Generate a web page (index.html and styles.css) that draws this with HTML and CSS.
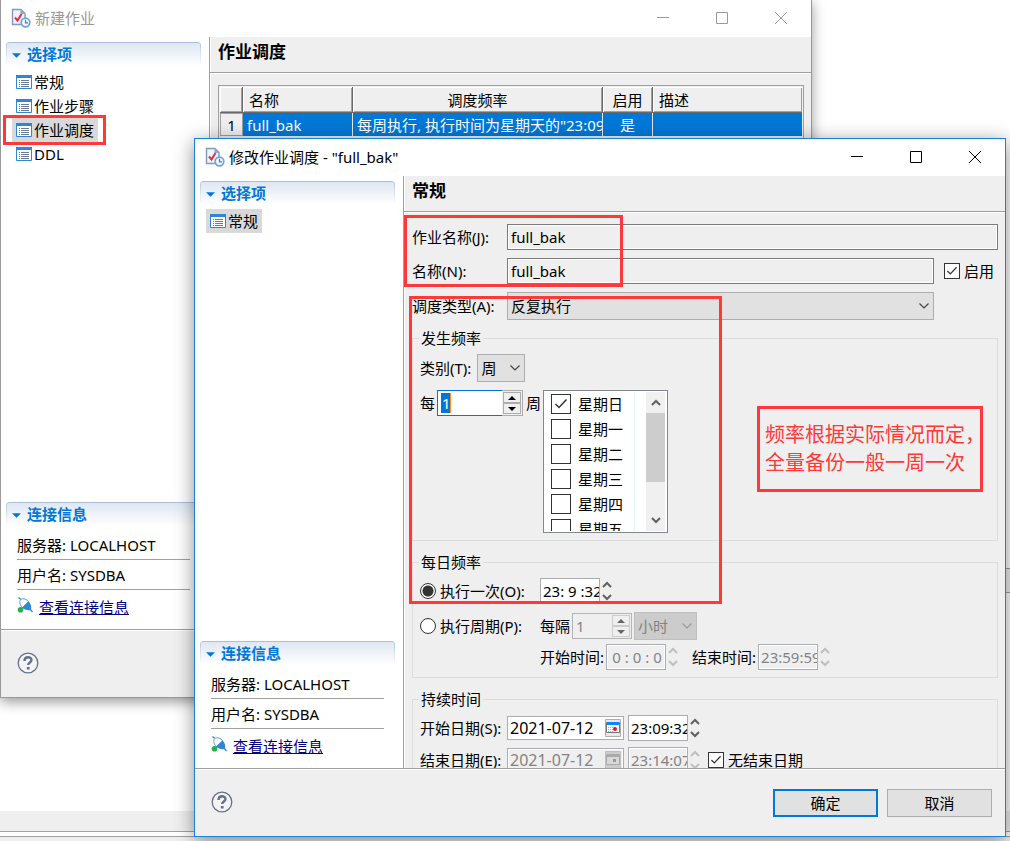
FILE: index.html
```html
<!DOCTYPE html>
<html lang="zh-CN">
<head>
    <meta charset="UTF-8">
    <meta name="viewport" content="width=device-width, initial-scale=1.0">
    <title>修改作业调度</title>
    <link rel="stylesheet" href="styles.css">
</head>
<body>
    <svg class="sprite" aria-hidden="true">
        <symbol id="icon-job" viewBox="0 0 20 20">
            <path d="M1.500 1.500h8.500l4 4v11h-12.500z" fill="#eef2fa" stroke="#8398bd" stroke-width="1.400"/>
            <path d="M9.500 1l5 5h-5z" fill="#8ba6d0"/>
            <path d="M4 9.500l2.500 3 4-6.500" fill="none" stroke="#dc3040" stroke-width="2"/>
            <circle cx="14.500" cy="14.500" r="4.300" fill="#f4faff" stroke="#6da4d8" stroke-width="1.700"/>
            <path d="M14.500 11.800v3h2.500" fill="none" stroke="#3c7fc4" stroke-width="1.200"/>
        </symbol>
        <symbol id="icon-list" viewBox="0 0 16 14">
            <path d="M.5.5h15v13h-15z" fill="#fff" stroke="#2f86d6"/>
            <path d="M0 0h16v3h-16z" fill="#2f86d6"/>
            <path d="M3 5.500h1M3 7.500h1M3 9.500h1M3 11.500h1M5 5.500h8M5 7.500h8M5 9.500h8M5 11.500h8" stroke="#6d7c96"/>
        </symbol>
        <symbol id="icon-plug" viewBox="0 0 16 16">
            <path d="M1.500.5l3 2.500" stroke="#2f86d6" stroke-width="1.200"/>
            <path d="M3.500 2.500c3-1.500 6.500-.5 8 2.500l-6 5.500c-2.500-2-3.500-5-2-8z" fill="#fff" stroke="#5a9edb"/>
            <path d="M11.500 4.500c2.500 2 3 5 2.500 8.500-3.500.5-6.500 0-9-2.500z" fill="#2f86d6"/>
            <path d="M13 12l2.500 3" stroke="#2f86d6" stroke-width="1.200"/>
            <circle cx="3.500" cy="12.800" r="2.800" fill="#22b14c"/>
        </symbol>
        <symbol id="icon-help" viewBox="0 0 22 22">
            <circle cx="11" cy="11" r="9.800" fill="#f4f4f4" stroke="#64708c" stroke-width="1.300"/>
            <path d="M7.500 9c0-5 7-4.500 7-1 0 2.500-3.300 2.500-3.300 5" fill="none" stroke="#64708c" stroke-width="2.400"/>
            <path d="M9.800 15h2.800v2.500h-2.800z" fill="#64708c"/>
        </symbol>
        <symbol id="icon-min" viewBox="0 0 12 12"><path d="M0 5.500h12" stroke="currentColor"/></symbol>
        <symbol id="icon-max" viewBox="0 0 12 12"><path d="M.5.5h11v11h-11z" fill="none" stroke="currentColor"/></symbol>
        <symbol id="icon-close" viewBox="0 0 12 12"><path d="M0 0l12 12M12 0l-12 12" stroke="currentColor"/></symbol>
        <symbol id="icon-down" viewBox="0 0 10 6"><path d="M.5.5l4.500 4.500 4.500-4.500" fill="none" stroke="currentColor" stroke-width="1.200"/></symbol>
        <symbol id="icon-arrow-up" viewBox="0 0 10 7"><path d="M1 6l4-4 4 4" fill="none" stroke="currentColor" stroke-width="2"/></symbol>
        <symbol id="icon-arrow-down" viewBox="0 0 10 7"><path d="M1 1l4 4 4-4" fill="none" stroke="currentColor" stroke-width="2"/></symbol>
        <symbol id="icon-tri-up" viewBox="0 0 8 4"><path d="M0 4l4-4 4 4z" fill="currentColor"/></symbol>
        <symbol id="icon-tri-down" viewBox="0 0 8 4"><path d="M0 0l4 4 4-4z" fill="currentColor"/></symbol>
        <symbol id="icon-check" viewBox="0 0 14 12"><path d="M1.500 6l3.500 3.500 7.500-8" fill="none" stroke="currentColor" stroke-width="1.500"/></symbol>
        <symbol id="icon-date" viewBox="0 0 16 18">
            <path d="M.5.5h15v17h-15z" fill="#e8e8e8" stroke="#adadad"/>
            <path d="M1.500 3.500h13v10h-13z" fill="#fff" stroke="#777"/>
            <path d="M2 3h12v3h-12z" fill="#0a84ff"/>
            <path d="M3 8.500h8M3 10.500h5M3 12.500h5" stroke="#aaa" stroke-dasharray="1 1"/>
            <circle cx="10" cy="10" r="2" fill="#e81123"/>
        </symbol>
        <symbol id="icon-date-off" viewBox="0 0 16 18">
            <path d="M.5.5h15v17h-15z" fill="#ccc" stroke="#bfbfbf"/>
            <path d="M1.500 3.500h13v10h-13z" fill="#d8d8d8" stroke="#aaa"/>
            <path d="M2 3h12v3h-12z" fill="#aaa"/>
            <path d="M8 8h3v3h-3z" fill="#999"/>
        </symbol>
    </svg>

    <div class="desktop">
        <div class="desktop-strip"></div>
        <div class="desktop-status"></div>

        <section class="window window-back">
            <header class="titlebar">
                <svg class="icon-app"><use href="#icon-job"/></svg>
                <span class="titlebar-text">新建作业</span>
                <button class="win-btn" aria-label="最小化"><svg><use href="#icon-min"/></svg></button>
                <button class="win-btn" aria-label="最大化"><svg><use href="#icon-max"/></svg></button>
                <button class="win-btn" aria-label="关闭"><svg><use href="#icon-close"/></svg></button>
            </header>
            <div class="window-body">
                <aside class="sidebar">
                    <h3 class="section-title"><svg><use href="#icon-tri-down"/></svg>选择项</h3>
                    <ul class="nav">
                        <li><svg><use href="#icon-list"/></svg>常规</li>
                        <li><svg><use href="#icon-list"/></svg>作业步骤</li>
                        <li class="active"><svg><use href="#icon-list"/></svg>作业调度</li>
                        <li><svg><use href="#icon-list"/></svg>DDL</li>
                    </ul>
                    <div class="connection">
                        <h3 class="section-title"><svg><use href="#icon-tri-down"/></svg>连接信息</h3>
                        <p>服务器: LOCALHOST</p>
                        <p>用户名: SYSDBA</p>
                        <div class="connection-link"><svg><use href="#icon-plug"/></svg><a href="#">查看连接信息</a></div>
                    </div>
                </aside>
                <main class="content">
                    <h2 class="content-title">作业调度</h2>
                    <div class="content-inner">
                        <div class="table-box">
                            <table class="table">
                                <thead>
                                    <tr>
                                        <th class="col-num"></th>
                                        <th class="col-name">名称</th>
                                        <th class="col-freq center">调度频率</th>
                                        <th class="col-on center">启用</th>
                                        <th>描述</th>
                                    </tr>
                                </thead>
                                <tbody>
                                    <tr>
                                        <td class="row-num">1</td>
                                        <td>full_bak</td>
                                        <td>每周执行, 执行时间为星期天的"23:09</td>
                                        <td class="center">是</td>
                                        <td></td>
                                    </tr>
                                </tbody>
                            </table>
                        </div>
                    </div>
                </main>
            </div>
            <footer class="window-footer">
                <svg class="icon-help"><use href="#icon-help"/></svg>
            </footer>
        </section>

        <section class="window window-front">
            <header class="titlebar">
                <svg class="icon-app"><use href="#icon-job"/></svg>
                <span class="titlebar-text">修改作业调度 - "full_bak"</span>
                <button class="win-btn" aria-label="最小化"><svg><use href="#icon-min"/></svg></button>
                <button class="win-btn" aria-label="最大化"><svg><use href="#icon-max"/></svg></button>
                <button class="win-btn" aria-label="关闭"><svg><use href="#icon-close"/></svg></button>
            </header>
            <div class="window-body">
                <aside class="sidebar">
                    <h3 class="section-title"><svg><use href="#icon-tri-down"/></svg>选择项</h3>
                    <ul class="nav">
                        <li class="active"><svg><use href="#icon-list"/></svg>常规</li>
                    </ul>
                    <div class="connection">
                        <h3 class="section-title"><svg><use href="#icon-tri-down"/></svg>连接信息</h3>
                        <p>服务器: LOCALHOST</p>
                        <p>用户名: SYSDBA</p>
                        <div class="connection-link"><svg><use href="#icon-plug"/></svg><a href="#">查看连接信息</a></div>
                    </div>
                </aside>
                <main class="content">
                    <h2 class="content-title">常规</h2>
                    <form class="content-inner">
                        <div class="form-grid">
                            <label for="jobName">作业名称(J):</label>
                            <input type="text" class="text-input wide" id="jobName" value="full_bak" readonly>
                            <label for="name">名称(N):</label>
                            <input type="text" class="text-input" id="name" value="full_bak" readonly>
                            <label class="check"><span class="box"><input type="checkbox" checked><svg><use href="#icon-check"/></svg></span>启用</label>
                            <label for="type">调度类型(A):</label>
                            <div class="select">
                                <select id="type"><option>反复执行</option></select>
                                <svg><use href="#icon-down"/></svg>
                            </div>
                        </div>

                        <fieldset class="group">
                            <legend>发生频率</legend>
                            <div class="row">
                                <label for="kind">类别(T):</label>
                                <div class="select select-week">
                                    <select id="kind"><option>周</option></select>
                                    <svg><use href="#icon-down"/></svg>
                                </div>
                            </div>
                            <div class="row row-week">
                                <label for="every">每</label>
                                <div class="spin spin-focus">
                                    <input type="text" id="every" value="1">
                                    <div class="spin-btns">
                                        <button type="button" aria-label="增加"><svg><use href="#icon-tri-up"/></svg></button>
                                        <button type="button" aria-label="减少"><svg><use href="#icon-tri-down"/></svg></button>
                                    </div>
                                </div>
                                <span class="unit">周</span>
                                <div class="list">
                                    <div class="list-items">
                                        <label class="check"><span class="box"><input type="checkbox" checked><svg><use href="#icon-check"/></svg></span>星期日</label>
                                        <label class="check"><span class="box"><input type="checkbox"></span>星期一</label>
                                        <label class="check"><span class="box"><input type="checkbox"></span>星期二</label>
                                        <label class="check"><span class="box"><input type="checkbox"></span>星期三</label>
                                        <label class="check"><span class="box"><input type="checkbox"></span>星期四</label>
                                        <label class="check"><span class="box"><input type="checkbox"></span>星期五</label>
                                    </div>
                                    <div class="scrollbar">
                                        <button type="button" aria-label="向上"><svg><use href="#icon-arrow-up"/></svg></button>
                                        <div class="thumb"></div>
                                        <button type="button" aria-label="向下"><svg><use href="#icon-arrow-down"/></svg></button>
                                    </div>
                                </div>
                            </div>
                        </fieldset>

                        <fieldset class="group">
                            <legend>每日频率</legend>
                            <div class="row">
                                <label class="radio"><input type="radio" name="daily" checked>执行一次(O):</label>
                                <div class="time">
                                    <input type="text" aria-label="执行时间" value="23: 9 :32">
                                    <div class="time-btns"><svg><use href="#icon-arrow-up"/></svg><svg><use href="#icon-arrow-down"/></svg></div>
                                </div>
                            </div>
                            <div class="row">
                                <label class="radio"><input type="radio" name="daily">执行周期(P):</label>
                                <label for="interval">每隔</label>
                                <div class="spin spin-off">
                                    <input type="text" id="interval" value="1" disabled>
                                    <div class="spin-btns">
                                        <button type="button" aria-label="增加" disabled><svg><use href="#icon-tri-up"/></svg></button>
                                        <button type="button" aria-label="减少" disabled><svg><use href="#icon-tri-down"/></svg></button>
                                    </div>
                                </div>
                                <div class="select select-hour">
                                    <select aria-label="间隔单位" disabled><option>小时</option></select>
                                    <svg><use href="#icon-down"/></svg>
                                </div>
                            </div>
                            <div class="row row-range">
                                <label for="from">开始时间:</label>
                                <div class="time time-off">
                                    <input type="text" class="center" id="from" value="0 : 0 : 0" disabled>
                                    <div class="time-btns"><svg><use href="#icon-arrow-up"/></svg><svg><use href="#icon-arrow-down"/></svg></div>
                                </div>
                                <label for="to" class="label-to">结束时间:</label>
                                <div class="time time-off">
                                    <input type="text" id="to" value="23:59:59" disabled>
                                    <div class="time-btns"><svg><use href="#icon-arrow-up"/></svg><svg><use href="#icon-arrow-down"/></svg></div>
                                </div>
                            </div>
                        </fieldset>

                        <fieldset class="group">
                            <legend>持续时间</legend>
                            <div class="row row-date">
                                <label for="startDate">开始日期(S):</label>
                                <div class="date">
                                    <input type="text" id="startDate" value="2021-07-12">
                                    <svg><use href="#icon-date"/></svg>
                                </div>
                                <div class="time">
                                    <input type="text" aria-label="开始时刻" value="23:09:32">
                                    <div class="time-btns"><svg><use href="#icon-arrow-up"/></svg><svg><use href="#icon-arrow-down"/></svg></div>
                                </div>
                            </div>
                            <div class="row row-date">
                                <label for="endDate">结束日期(E):</label>
                                <div class="date date-off">
                                    <input type="text" id="endDate" value="2021-07-12" disabled>
                                    <svg><use href="#icon-date-off"/></svg>
                                </div>
                                <div class="time time-off">
                                    <input type="text" aria-label="结束时刻" value="23:14:07" disabled>
                                    <div class="time-btns"><svg><use href="#icon-arrow-up"/></svg><svg><use href="#icon-arrow-down"/></svg></div>
                                </div>
                                <label class="check"><span class="box"><input type="checkbox" checked><svg><use href="#icon-check"/></svg></span>无结束日期</label>
                            </div>
                        </fieldset>
                    </form>
                </main>
            </div>
            <footer class="window-footer">
                <svg class="icon-help"><use href="#icon-help"/></svg>
                <button class="btn btn-primary">确定</button>
                <button class="btn">取消</button>
            </footer>
        </section>

        <div class="mark mark-nav"></div>
        <div class="mark mark-names"></div>
        <div class="mark mark-freq"></div>
        <div class="mark mark-note">频率根据实际情况而定，<br>全量备份一般一周一次</div>
    </div>
</body>
</html>
```
FILE: styles.css
```css
* {
    box-sizing: border-box;
}
body {
    margin: 0;
    font-family: "Noto Sans", "Noto Sans CJK SC", sans-serif;
    font-size: 15px;
    line-height: 20px;
    color: #000;
    background: #fff;
}
input, select, button {
    font: inherit;
    color: inherit;
    margin: 0;
    padding: 0;
    border-radius: 0;
}
button {
    border: none;
    background: none;
}
svg {
    display: block;
    flex: none;
}
.sprite {
    position: absolute;
    width: 0;
    height: 0;
}
.center {
    text-align: center;
}

/* desktop behind the windows */
.desktop {
    position: relative;
    display: flex;
    flex-direction: column;
    justify-content: flex-end;
    height: 100vh;
    min-height: 700px;
    overflow: hidden;
}
.desktop-strip {
    height: 25px;
    margin-bottom: 218px;
    background: #efefef;
    border: solid #a0a0a0;
    border-width: 1px 0;
}
.desktop-status {
    height: 30px;
    padding-top: 20px;
    background: #efefef;
}
.desktop-status::before {
    content: "";
    display: block;
    height: 4px;
    background: #fff;
    border: solid #a0a0a0;
    border-width: 1px 0;
}

/* windows */
.window {
    position: absolute;
    display: flex;
    flex-direction: column;
    background: #fff;
    border: 1px solid #999;
}
.window-back {
    top: -1px;
    left: 0;
    right: 198px;
    bottom: 143px;
    box-shadow: 0 4px 12px rgba(0, 0, 0, 0.4);
}
.window-front {
    top: 138px;
    left: 194px;
    right: 4px;
    bottom: 4px;
    border-color: #1883d7;
    box-shadow: 0 4px 18px rgba(0, 0, 0, 0.45);
}
.titlebar {
    display: flex;
    align-items: center;
    height: 37px;
    padding: 0 1px 2px 10px;
}
.window-back .titlebar {
    color: #999;
}
.icon-app {
    width: 20px;
    height: 20px;
}
.titlebar-text {
    flex: 1;
    margin-left: 4px;
}
.win-btn {
    display: grid;
    place-items: center;
    width: 59px;
    height: 34px;
}
.win-btn svg {
    width: 12px;
    height: 12px;
}
.window-body {
    display: flex;
    flex: 1;
    min-height: 0;
}
.window-footer {
    display: flex;
    align-items: center;
    gap: 9px;
    height: 68px;
    padding: 0 13px 0 16px;
    background: #efefef;
    border-top: 1px solid #a0a0a0;
    box-shadow: inset 0 1px #fff;
}
.icon-help {
    width: 22px;
    height: 22px;
    margin: 0 auto 2px 0;
}

/* sidebar */
.sidebar {
    display: flex;
    flex-direction: column;
    flex: none;
    width: 208px;
    padding: 5px 8px 5px 5px;
}
.section-title {
    display: flex;
    align-items: center;
    gap: 6px;
    height: 24px;
    margin: 0 0 4px;
    padding: 0 0 2px 6px;
    font-size: 15px;
    font-weight: bold;
    color: #0078d7;
    border-top: 1px solid #a9c0dc;
    border-radius: 4px;
    background:
        linear-gradient(#b4c8e0, #fff) left / 1px 100% no-repeat,
        linear-gradient(#b4c8e0, #fff) right / 1px 100% no-repeat,
        linear-gradient(#dfe7f2, #fff);
}
.section-title svg {
    width: 9px;
    height: 5px;
    margin-top: 3px;
}
.nav {
    margin: 0 0 0 6px;
    padding: 0;
    list-style: none;
}
.nav li {
    display: flex;
    align-items: center;
    gap: 2px;
    width: fit-content;
    height: 24px;
    padding: 0 4px;
}
.nav .active {
    background: #d9d9d9;
}
.nav svg {
    width: 16px;
    height: 14px;
}
.connection {
    margin-top: auto;
}
.connection p {
    height: 30px;
    margin: 0 11px;
    line-height: 30px;
    border-bottom: 1px solid #a0a0a0;
}
.connection-link {
    display: flex;
    align-items: center;
    gap: 6px;
    height: 34px;
    padding-left: 11px;
}
.connection-link svg {
    width: 16px;
    height: 16px;
    margin-bottom: 5px;
}
.connection-link a {
    color: #000080;
}

/* right part */
.content {
    flex: 1;
    min-width: 0;
    overflow: hidden;
    background: #efefef;
    border-left: 1px solid #a0a0a0;
    box-shadow: inset 1px 0 #fff;
}
.content-title {
    height: 36px;
    margin: 0;
    padding-left: 8px;
    font-size: 17px;
    font-weight: bold;
    line-height: 30px;
    border-bottom: 1px solid #a0a0a0;
    box-shadow: 0 1px #fff;
}
.content-inner {
    padding: 12px 7px 0 8px;
}

/* schedule table */
.table-box {
    height: 400px;
    padding: 1px;
    background: #efefef;
    border: 1px solid #a0a0a0;
}
.table {
    width: 100%;
    table-layout: fixed;
    border-collapse: separate;
    border-spacing: 0;
}
.table th, .table td {
    overflow: hidden;
    white-space: nowrap;
    text-align: left;
    font-weight: normal;
}
.table th {
    height: 26px;
    padding: 0 6px;
    border: solid #696969;
    border-width: 0 1px 1px 0;
    box-shadow: inset 1px 1px #fff, inset -1px -1px #a0a0a0;
}
.table td {
    height: 23px;
    padding: 0 4px;
    color: #fff;
    background: #0078d7;
    border-right: 1px solid #e8e8e8;
}
.table th:last-child, .table td:last-child {
    border-right: none;
}
.table .center {
    text-align: center;
}
.table .row-num {
    text-align: center;
    color: #000;
    background: #efefef;
    border: 1px solid #a0a0a0;
}
.col-num {
    width: 23px;
}
.col-name {
    width: 110px;
}
.col-freq {
    width: 250px;
}
.col-on {
    width: 50px;
}

/* form */
.form-grid {
    display: grid;
    grid-template-columns: 85px 1fr 54px;
    gap: 8px 10px;
    align-items: center;
    white-space: nowrap;
}
.wide {
    grid-column: 2 / 4;
}
.text-input {
    width: 100%;
    height: 26px;
    padding: 0 3px;
    background: #efefef;
    border: 1px solid #7a7a7a;
    box-shadow: inset 0 0 0 1px #fff;
}
.select {
    display: grid;
    align-items: center;
    height: 28px;
}
.select select, .select svg {
    grid-area: 1 / 1;
}
.select select {
    appearance: none;
    width: 100%;
    height: 28px;
    padding: 0 3px;
    background: #e1e1e1;
    border: 1px solid #adadad;
}
.select svg {
    justify-self: end;
    width: 10px;
    height: 6px;
    margin-right: 5px;
    color: #444;
    pointer-events: none;
}
.select-week {
    width: 48px;
}
.select-hour {
    width: 63px;
}
.select-hour select {
    color: #838383;
    background: #ccc;
    border-color: #bfbfbf;
    opacity: 1;
}
.select-hour svg {
    color: #999;
}
.check {
    display: flex;
    align-items: center;
    gap: 4px;
    white-space: nowrap;
}
.box {
    display: grid;
    place-items: center;
    color: #333;
}
.box input, .box svg {
    grid-area: 1 / 1;
}
.box input {
    appearance: none;
    width: 16px;
    height: 16px;
    background: #fff;
    border: 1px solid #333;
}
.box svg {
    width: 12px;
    height: 10px;
    pointer-events: none;
}
.group {
    min-width: 0;
    margin: 8px 0 11px;
    padding: 6px 7px 7px;
    border: 1px solid #dcdcdc;
}
.group + .group {
    margin-top: 0;
}
.group legend {
    height: 20px;
    margin-left: -1px;
    padding: 0 2px;
}
.row {
    display: flex;
    align-items: center;
    white-space: nowrap;
}
.row + .row {
    margin-top: 8px;
}
.row > label:first-child {
    flex: none;
}
.row .select-week {
    margin-left: 6px;
}
.row-week {
    align-items: flex-start;
    line-height: 26px;
}
.row-week .spin {
    margin-left: 2px;
}
.unit {
    margin: 0 2px 0 3px;
}

/* number boxes with up/down buttons */
.spin {
    display: flex;
    height: 26px;
    background: #fff;
    border: 1px solid #adadad;
}
.spin input {
    flex: 1;
    min-width: 0;
    padding: 0 3px;
    border: none;
    background: none;
}
.spin-focus {
    width: 86px;
}
.spin-focus input {
    margin: -1px 0 -1px -1px;
    padding-left: 4px;
    color: #fff;
    border: solid #0078d7;
    border-width: 1px 0 1px 1px;
    background:
        linear-gradient(#ff9020, #ff9020) 12px 2px / 1px 20px no-repeat,
        linear-gradient(#0078d7, #0078d7) 3px 2px / 9px 20px no-repeat,
        #fff;
}
.spin-off {
    width: 60px;
    margin-right: 2px;
    color: #838383;
    background: #efefef;
    border-color: #b4b4b4;
}
.spin-btns {
    display: grid;
    grid-template-rows: 1fr 1fr;
    width: 20px;
    padding: 1px;
    background: #efefef;
}
.spin-btns button {
    display: grid;
    place-items: center;
    border: 1px solid #adadad;
}
.spin-off button {
    color: #666;
    border-color: #ccc;
}
.spin-btns svg {
    width: 8px;
    height: 4px;
}

/* weekday list */
.list {
    display: flex;
    width: 125px;
    height: 143px;
    padding: 1px 2px 1px 7px;
    background: #fff;
    border: 1px solid #828790;
    line-height: 20px;
}
.list-items {
    flex: 1;
    margin-right: 11px;
    overflow: hidden;
    border-right: 1px solid #e5f3ff;
}
.list .check {
    gap: 7px;
    height: 25px;
    padding-bottom: 1px;
}
.list .box input {
    width: 20px;
    height: 20px;
}
.list .box svg {
    width: 14px;
    height: 12px;
}
.scrollbar {
    display: flex;
    flex-direction: column;
    width: 19px;
    background: #f0f0f0;
    color: #606060;
}
.scrollbar button {
    display: grid;
    place-items: center;
    height: 21px;
}
.scrollbar button:last-child {
    margin-top: auto;
}
.scrollbar svg {
    width: 10px;
    height: 7px;
}
.thumb {
    height: 69px;
    background: #cdcdcd;
}

/* daily part */
.radio {
    display: flex;
    align-items: center;
    gap: 4px;
    width: 120px;
}
.radio input {
    appearance: none;
    width: 16px;
    height: 16px;
    border: 1px solid #333;
    border-radius: 50%;
    background: #fff;
}
.radio input:checked {
    background: radial-gradient(#333 5px, #fff 6px);
}
.time {
    display: flex;
    align-items: center;
    gap: 2px;
}
.time input {
    width: 60px;
    height: 26px;
    padding: 0 0 0 2px;
    background: #fff;
    border: 1px solid #abadb3;
}
.time-btns {
    display: grid;
    gap: 6px;
    color: #606060;
}
.time-btns svg {
    width: 10px;
    height: 7px;
}
.time-off {
    color: #838383;
}
.time-off input {
    background: #efefef;
    box-shadow: inset 0 0 0 1px #fff;
}
.time-off .time-btns {
    color: #bfbfbf;
}
.row label[for="interval"] {
    margin-right: 2px;
}
.row + .row-range {
    margin-top: 4px;
    padding-left: 120px;
}
.row-range .time {
    margin-left: 2px;
}
.label-to {
    margin-left: 14px;
}

/* duration part */
.row-date > label:first-child {
    width: 87px;
}
.row-date + .row-date {
    margin-top: 6px;
}
.date {
    display: flex;
    align-items: center;
    width: 117px;
    height: 24px;
    margin-right: 4px;
    padding: 0 2px;
    background: #fff;
    border: 1px solid #abadb3;
}
.date input {
    flex: 1;
    min-width: 0;
    font-size: 16px;
    border: none;
    background: none;
}
.date svg {
    width: 16px;
    height: 18px;
}
.date-off {
    color: #838383;
    background: #efefef;
    box-shadow: inset 0 0 0 1px #fff;
}
.row-date .check {
    margin-left: 8px;
}

.btn {
    width: 105px;
    height: 28px;
    background: #e1e1e1;
    border: 1px solid #adadad;
}
.btn-primary {
    border: 2px solid #0078d7;
}

/* red marks over the windows */
.mark {
    position: absolute;
    border: 3px solid #ff3838;
    pointer-events: none;
}
.mark-nav {
    left: 3px;
    top: 115px;
    width: 103px;
    height: 30px;
}
.mark-names {
    left: 404px;
    top: 215px;
    width: 219px;
    height: 72px;
}
.mark-freq {
    left: 409px;
    top: 296px;
    width: 313px;
    height: 308px;
}
.mark-note {
    left: 757px;
    top: 406px;
    width: 226px;
    height: 86px;
    padding: 12px 0 0 5px;
    font-size: 20px;
    line-height: 28px;
    white-space: nowrap;
    color: #ff3838;
}
```
